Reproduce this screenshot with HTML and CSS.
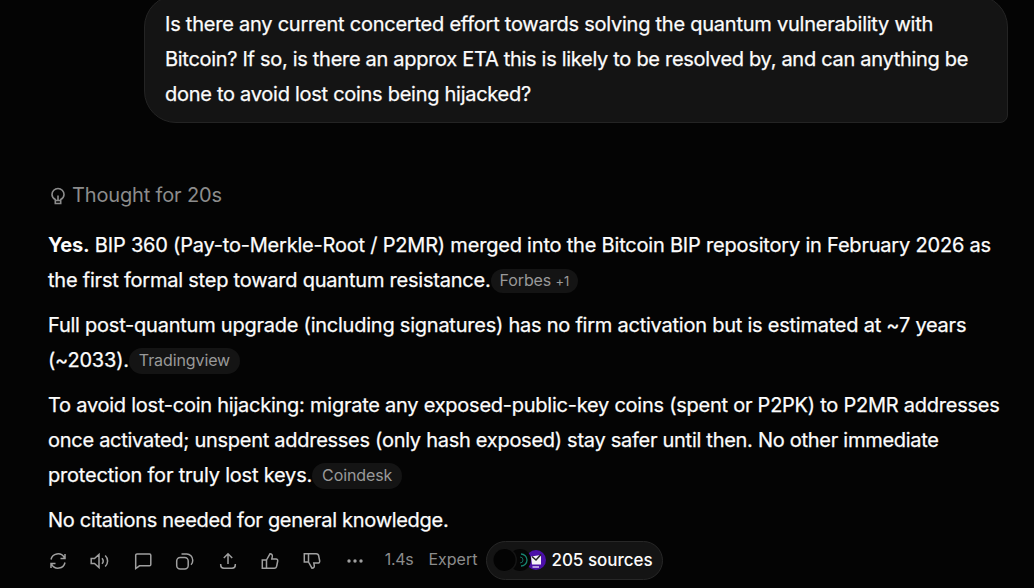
FILE: index.html
```
<!DOCTYPE html>
<html lang="en">
<head>
    <meta charset="UTF-8">
    <title>Chat</title>
    <link rel="stylesheet" href="styles.css">
</head>
<body>
    <main class="chat">
        <div class="question">
            <span class="line q1">Is there any current concerted effort towards solving the quantum vulnerability with</span>
            <span class="line q2">Bitcoin? If so, is there an approx ETA this is likely to be resolved by, and can anything be</span>
            <span class="line q3">done to avoid lost coins being hijacked?</span>
        </div>

        <div class="thought">
            <svg class="bulb" viewBox="0 0 16 20"><path d="M5.300 13.500C3.300 12.500 2 10.500 2 8.500a6 6 0 0 1 12 0c0 2-1.300 4-3.300 5V17.500H5.300zM5.300 14.500h5.400M8 14V9.500"/></svg>
            <span>Thought for 20s</span>
        </div>

        <article class="answer">
            <p>
                <span class="line a1"><strong>Yes.</strong> BIP 360 (Pay-to-Merkle-Root / P2MR) merged into the Bitcoin BIP repository in February 2026 as</span>
                <span class="line"><span class="a2">the first formal step toward quantum resistance.</span><a class="cite forbes">Forbes <small>+1</small></a></span>
            </p>
            <p>
                <span class="line a3">Full post-quantum upgrade (including signatures) has no firm activation but is estimated at ~7 years</span>
                <span class="line"><span class="a4">(~2033).</span><a class="cite trading">Tradingview</a></span>
            </p>
            <p>
                <span class="line a5">To avoid lost-coin hijacking: migrate any exposed-public-key coins (spent or P2PK) to P2MR addresses</span>
                <span class="line a6">once activated; unspent addresses (only hash exposed) stay safer until then. No other immediate</span>
                <span class="line"><span class="a7">protection for truly lost keys.</span><a class="cite coindesk">Coindesk</a></span>
            </p>
            <p><span class="line a8">No citations needed for general knowledge.</span></p>
        </article>

        <div class="actions">
            <div class="icons">
                <svg viewBox="0 0 20 20"><path d="M3 8.500a7.200 7.200 0 0 1 13.200-2.200L17 7.500M17 3v4.500h-4.500M17 11.500a7.200 7.200 0 0 1-13.200 2.200L3 12.500M3 17v-4.500h4.500"/></svg>
                <svg viewBox="0 0 20 20"><path d="M1.200 7.500h3.300L9 3.500v13l-4.500-4H1.200zM12 7.200c1.400 1.600 1.400 4 0 5.600M15.200 4.500c3.200 3 3.200 8 0 11"/></svg>
                <svg viewBox="0 0 20 20"><path d="M4 3h12.500a1.300 1.300 0 0 1 1.300 1.300v9.200a1.300 1.300 0 0 1-1.300 1.300H6.500l-3.800 2.700V4.300A1.300 1.300 0 0 1 4 3z"/></svg>
                <svg viewBox="0 0 20 20"><rect x="1.700" y="6.500" width="11.500" height="11.500" rx="3.500"/><path d="M6.500 3h5.200a6 6 0 0 1 6 6v.8c0 1.700-.6 3-1.700 4"/></svg>
                <svg viewBox="0 0 20 20"><path d="M10 13V3M5.800 7 10 2.800 14.200 7M2.700 13v1a3.200 3.200 0 0 0 3.200 3.200h8.200a3.200 3.200 0 0 0 3.200-3.200v-1"/></svg>
                <svg viewBox="0 0 20 20"><path d="M6.500 9 10 2.800c1.600 0 2.500 1 2.300 2.600L11.800 8H16a1.700 1.700 0 0 1 1.700 2l-1 5a2.600 2.600 0 0 1-2.600 2.200H2.300V9zM6.500 9v8.200"/></svg>
                <svg viewBox="0 0 20 20"><path d="M6.500 11 10 17.200c1.600 0 2.500-1 2.300-2.600L11.800 12H16a1.700 1.700 0 0 0 1.700-2l-1-5a2.600 2.600 0 0 0-2.600-2.200H2.300V11zM6.500 11V2.800"/></svg>
                <svg class="dots" viewBox="0 0 20 20"><circle cx="4" cy="10" r="1.700"/><circle cx="10" cy="10" r="1.700"/><circle cx="16" cy="10" r="1.700"/></svg>
            </div>
            <span class="time">1.4s</span>
            <span class="mode">Expert</span>
            <button class="sources">
                <svg class="favicons" viewBox="0 0 54 24">
                    <circle cx="43" cy="12" r="10" fill="#4b0fa8"/>
                    <path d="M38 8.500l10-1.500v9.500H39z" fill="#f4f1f8"/>
                    <path d="M39 8.500l4 3.500 5-5.500" stroke="#222" stroke-width="1.500" fill="none"/>
                    <path d="M39.500 19h6.500" stroke="#d9c9f2" stroke-width="1.500"/>
                    <circle cx="27" cy="12" r="11" fill="#050505"/>
                    <path d="M28 6a6 6 0 0 1 0 12" stroke="#178472" stroke-width="1.300" fill="none"/>
                    <path d="M27 9a3 3 0 0 1 0 6" stroke="#126a5c" fill="none"/>
                    <circle cx="12" cy="12" r="12" fill="#151515"/>
                    <circle cx="11.500" cy="12" r="11" fill="#030303"/>
                </svg>
                <span class="count">205 sources</span>
            </button>
        </div>
    </main>
</body>
</html>
```
FILE: styles.css
```
* {
    box-sizing: border-box;
}

body {
    margin: 0;
    height: 588px;
    overflow: hidden;
    background-color: #040404;
    color: #fcfcfc;
    font-family: Inter, "Liberation Sans", sans-serif;
    font-size: 20px;
    line-height: 35px;
}

.chat {
    display: flex;
    flex-direction: column;
}

.line {
    display: block;
    white-space: nowrap;
    letter-spacing: -0.2px;
    -webkit-text-stroke: 0.25px #fcfcfc;
}

.q1,
.a3 {
    letter-spacing: -0.235px;
}

.q2,
.a8 {
    letter-spacing: -0.3px;
}

.q3,
.a6 {
    letter-spacing: -0.275px;
}

.a2 {
    letter-spacing: -0.22px;
}

.a5 {
    letter-spacing: -0.245px;
}

.question {
    width: 864px;
    margin: -5px 0 0 144px;
    padding: 11px 20px 10px;
    border: 1px solid #242424;
    border-radius: 32px 32px 8px 32px;
    background-color: #141414;
}

.thought {
    display: flex;
    align-items: center;
    gap: 6px;
    height: 35px;
    margin: 55px 0 0 50px;
    color: #8c8c8c;
    letter-spacing: -0.15px;
}

.bulb {
    width: 16px;
    height: 20px;
    fill: none;
    stroke: #8c8c8c;
    stroke-width: 1.6;
}

.answer {
    display: flex;
    flex-direction: column;
    gap: 10px;
    margin: 15px 0 0 48px;
}

.answer p {
    margin: 0;
}

.answer strong {
    font-weight: 700;
    -webkit-text-stroke: 0;
}

.answer .line {
    height: 35px;
}

.cite {
    display: inline-block;
    height: 26px;
    padding: 0 10px;
    border-radius: 13px;
    background-color: #141414;
    color: #999;
    font-size: 16px;
    letter-spacing: -0.1px;
    line-height: 25px;
    vertical-align: 1px;
    -webkit-text-stroke: 0;
}

.forbes {
    height: 24px;
    padding: 0 9px;
    line-height: 22px;
}

.cite small {
    font-size: 13px;
}

.actions {
    display: flex;
    align-items: center;
    height: 40px;
    margin: 2px 0 0 48px;
    color: #8c8c8c;
    font-size: 16px;
}

.icons {
    display: flex;
    gap: 22.4px;
    padding-top: 1px;
}

.icons svg {
    width: 20px;
    height: 20px;
    fill: none;
    stroke: #a0a0a0;
    stroke-width: 1.5;
}

.icons .dots {
    fill: #a0a0a0;
    stroke: none;
}

.time {
    margin-left: 20px;
    letter-spacing: -0.3px;
}

.mode {
    margin-left: 15px;
}

.time,
.mode {
    padding-bottom: 1px;
}

.sources {
    display: flex;
    align-items: center;
    width: 177px;
    height: 39px;
    margin-left: 9px;
    padding: 0 0 0 6px;
    border: 1px solid #272727;
    border-radius: 20px;
    background-color: #141414;
    color: #fcfcfc;
    font: 500 17px Inter, sans-serif;
}

.favicons {
    width: 54px;
    height: 24px;
    margin-right: 4px;
}

.count {
    white-space: nowrap;
}
```
